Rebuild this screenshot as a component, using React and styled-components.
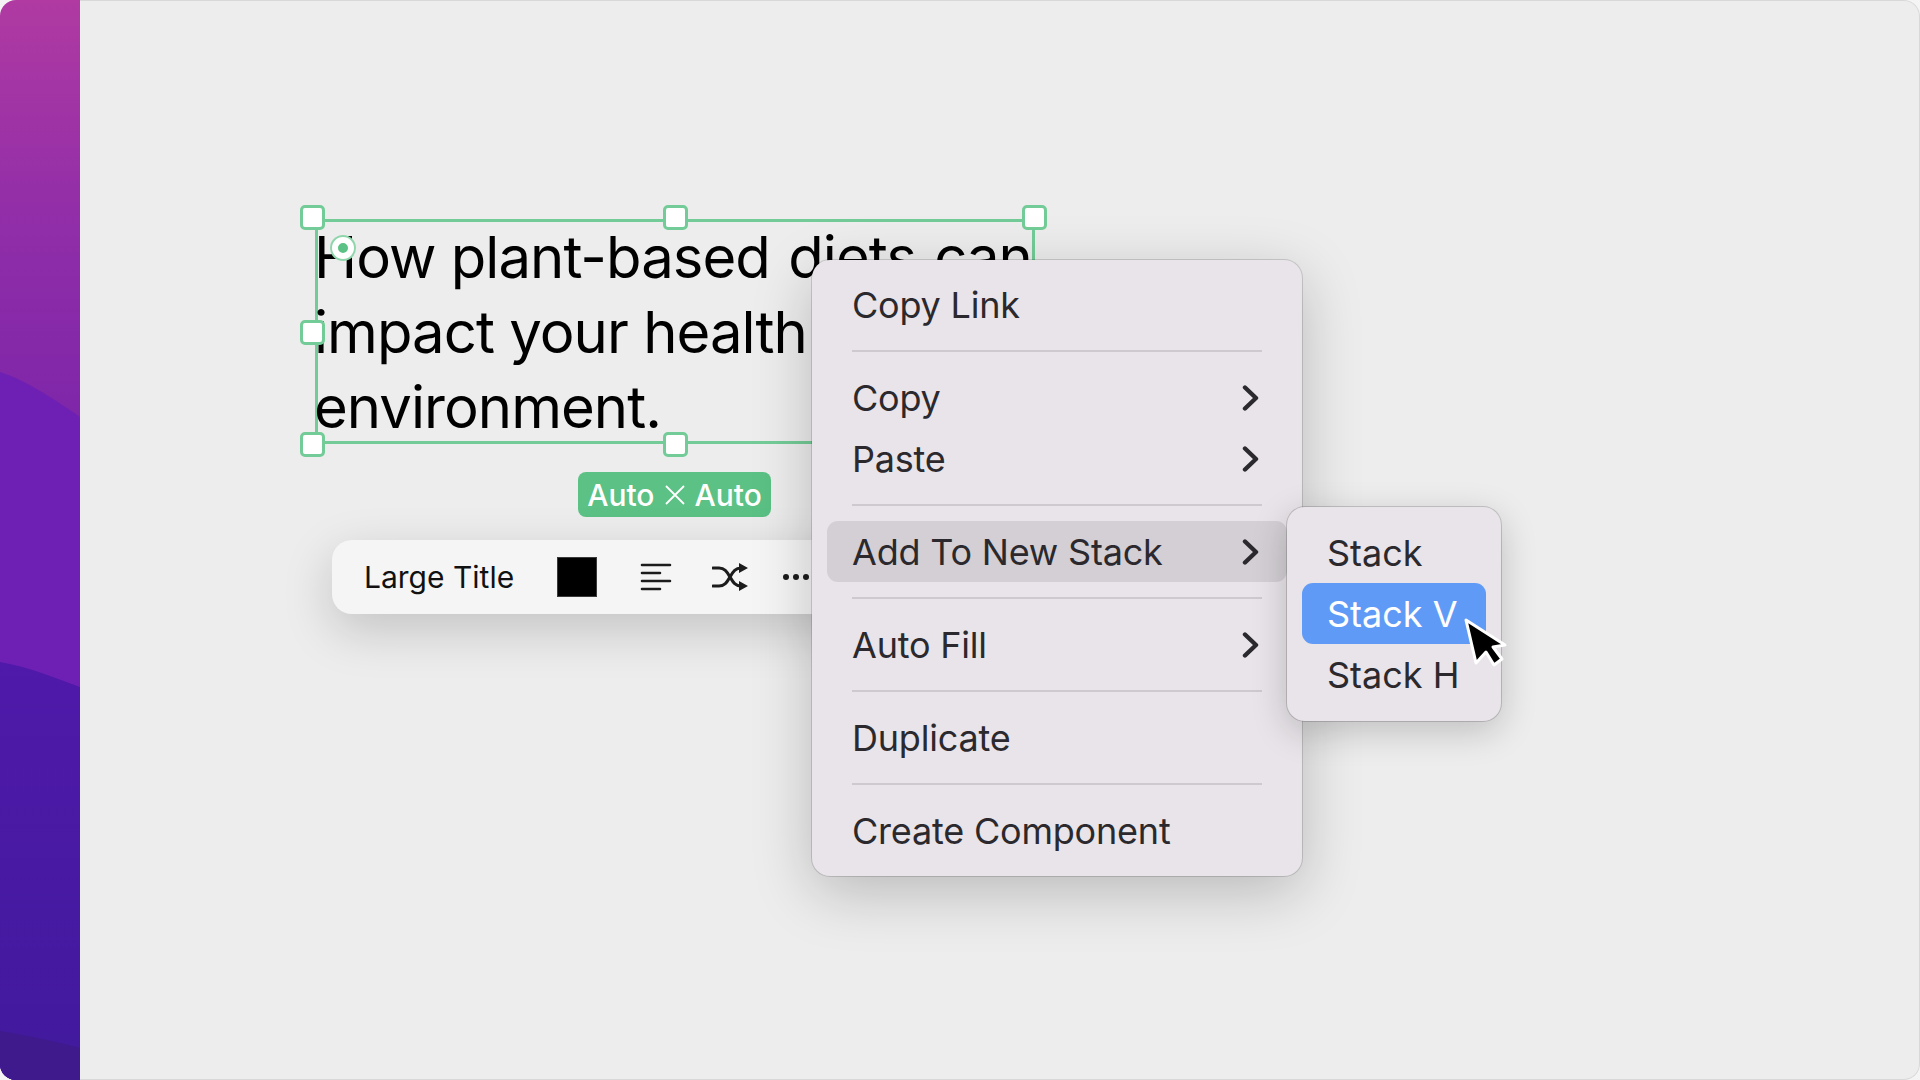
import { createGlobalStyle, styled } from "styled-components";

const GlobalStyle = createGlobalStyle`
  html, body {
    margin: 0;
    background: #f4f4f4;
  }
  body {
    font-family: Inter, "Liberation Sans", sans-serif;
  }
`;

const menuRows = [
  { label: "Copy Link" },
  { separator: true },
  { label: "Copy", more: true },
  { label: "Paste", more: true },
  { separator: true },
  { label: "Add To New Stack", more: true, open: true },
  { separator: true },
  { label: "Auto Fill", more: true },
  { separator: true },
  { label: "Duplicate" },
  { separator: true },
  { label: "Create Component" },
];

const handleSpots = [
  { x: "-6px", y: "-5px" },
  { x: "357px", y: "-5px" },
  { x: "716px", y: "-5px" },
  { x: "-6px", y: "110px" },
  { x: "-6px", y: "222px" },
  { x: "357px", y: "222px" },
];

const Chevron = () => (
  <ChevronIcon viewBox="0 0 17 26" fill="none">
    <path d="M3 2.5 L14 13 L3 23.5" stroke="#2b292d" strokeWidth="4.4" strokeLinecap="round" strokeLinejoin="round" />
  </ChevronIcon>
);

const App = () => {
  return (
    <>
      <GlobalStyle />
      <Window>
        <Wallpaper>
          <svg width="80" height="1080" viewBox="0 0 80 1080" preserveAspectRatio="none">
            <defs>
              <linearGradient id="wallTop" gradientUnits="userSpaceOnUse" x1="0" y1="0" x2="0" y2="420">
                <stop offset="0" stopColor="#b03aa2" />
                <stop offset="0.5" stopColor="#922ea8" />
                <stop offset="1" stopColor="#7e26a9" />
              </linearGradient>
              <linearGradient id="wallMid" gradientUnits="userSpaceOnUse" x1="0" y1="660" x2="0" y2="1050">
                <stop offset="0" stopColor="#4f19a9" />
                <stop offset="1" stopColor="#421a9e" />
              </linearGradient>
            </defs>
            <rect width="80" height="1080" fill="url(#wallTop)" />
            <path d="M0 372 C30 382 55 400 80 417 L80 1080 L0 1080 Z" fill="#6e20b4" />
            <path d="M0 662 C30 667 55 678 80 687 L80 1080 L0 1080 Z" fill="url(#wallMid)" />
            <path d="M0 1031 C30 1036 50 1040 80 1048 L80 1080 L0 1080 Z" fill="#3e1a8c" />
          </svg>
        </Wallpaper>
        <Canvas>
          <Selection>
            <Headline>
              How plant-based <LooseWords>diets can</LooseWords>
              <br />
              impact your health and the
              <br />
              environment.
            </Headline>
            {handleSpots.map((spot) => (
              <Handle key={spot.x + spot.y} $x={spot.x} $y={spot.y} />
            ))}
            <RotateDot />
          </Selection>
          <SizeBadge>
            Auto
            <svg width="22" height="22" viewBox="0 0 22 22">
              <path d="M2 2 L20 20 M20 2 L2 20" stroke="#fff" strokeWidth="1.8" />
            </svg>
            Auto
          </SizeBadge>
          <Toolbar>
            <StyleName>Large Title</StyleName>
            <Swatch />
            <svg width="32" height="28" viewBox="0 0 32 28" fill="none" stroke="#1c1c1c" strokeWidth="2.6" strokeLinecap="round">
              <path d="M2 2 H30 M2 10 H20 M2 18 H30 M2 26 H20" />
            </svg>
            <svg width="36" height="28" viewBox="0 0 36 28">
              <path
                d="M1 5 H7 C13 5 15 9 18 14 C21 19 23 23 29 23 M1 23 H7 C13 23 15 19 18 14 C21 9 23 5 29 5"
                fill="none"
                stroke="#1c1c1c"
                strokeWidth="3"
                strokeLinecap="round"
              />
              <path d="M27 0 L36 5 L27 10 Z M27 18 L36 23 L27 28 Z" fill="#1c1c1c" />
            </svg>
            <Dots>
              <span />
              <span />
              <span />
            </Dots>
          </Toolbar>
          <Menu>
            {menuRows.map((row, i) =>
              row.separator ? (
                <Separator key={i} />
              ) : (
                <MenuRow key={row.label} $open={row.open}>
                  {row.label}
                  {row.more && <Chevron />}
                </MenuRow>
              )
            )}
            <SubMenu>
              <SubRow>Stack</SubRow>
              <SubRow $active>Stack V</SubRow>
              <SubRow>Stack H</SubRow>
            </SubMenu>
          </Menu>
          <Cursor width="46" height="58" viewBox="0 0 46 58">
            <path
              d="M4 3 L14 46 L24 35 L32 48 L40 42 L31 30 L43 28 Z"
              fill="#000"
              stroke="#fff"
              strokeWidth="3"
              strokeLinejoin="round"
            />
          </Cursor>
        </Canvas>
      </Window>
    </>
  );
};
export default App;

const Window = styled.div`
  display: flex;
  width: 1920px;
  height: 1080px;
  box-sizing: border-box;
  border-radius: 16px;
  overflow: hidden;
  background: #ededed;
`;

const Wallpaper = styled.div`
  flex: 0 0 80px;
  height: 1080px;
  svg {
    display: block;
  }
`;

const Canvas = styled.div`
  position: relative;
  flex: 1;
  background: #ededed;
  border: 1px solid #d8d8d8;
  border-left: none;
  border-radius: 0 16px 16px 0;
`;

const Selection = styled.div`
  position: absolute;
  left: 235px;
  top: 218px;
  width: 720px;
  height: 225px;
  box-sizing: border-box;
  border: 3px solid #73cc97;
`;

const Headline = styled.div`
  font-size: 58px;
  line-height: 75px;
  font-weight: 400;
  color: #000;
  white-space: nowrap;
  margin-top: -2px;
  margin-left: -4px;
  letter-spacing: -0.95px;
`;

const LooseWords = styled.span`
  margin-left: 3px;
  word-spacing: 3px;
`;

const Handle = styled.div`
  position: absolute;
  left: ${(p) => p.$x};
  top: ${(p) => p.$y};
  width: 25px;
  height: 25px;
  margin: -12px 0 0 -12px;
  box-sizing: border-box;
  background: #fff;
  border: 3px solid #73cc97;
  border-radius: 5px;
`;

const RotateDot = styled.div`
  position: absolute;
  left: 14px;
  top: 15px;
  width: 22px;
  height: 22px;
  box-sizing: border-box;
  border-radius: 50%;
  border: 6px solid #fff;
  box-shadow: 0 0 0 2px #8fd6ac;
  background: #5bc184;
`;

const SizeBadge = styled.div`
  position: absolute;
  left: 498px;
  top: 471px;
  width: 193px;
  height: 45px;
  display: flex;
  align-items: center;
  justify-content: center;
  gap: 9px;
  border-radius: 8px;
  background: #5bc184;
  color: #fff;
  font-size: 30px;
  font-weight: 500;
`;

const Toolbar = styled.div`
  position: absolute;
  left: 252px;
  top: 539px;
  width: 560px;
  height: 74px;
  box-sizing: border-box;
  padding-left: 32px;
  display: flex;
  align-items: center;
  background: #f5f5f5;
  border-radius: 20px;
  box-shadow: 0 16px 50px rgba(0, 0, 0, 0.18);
  > svg:nth-of-type(1) {
    margin-left: 43px;
  }
  > svg:nth-of-type(2) {
    margin-left: 40px;
  }
`;

const StyleName = styled.div`
  font-size: 30px;
  color: #111;
  white-space: nowrap;
`;

const Swatch = styled.div`
  width: 40px;
  height: 40px;
  margin-left: 43px;
  box-sizing: border-box;
  background: #000;
  border: 1px solid #3a3a3a;
`;

const Dots = styled.div`
  display: flex;
  gap: 4px;
  margin-left: 35px;
  span {
    width: 6px;
    height: 6px;
    border-radius: 50%;
    background: #1c1c1c;
  }
`;

const Menu = styled.div`
  position: absolute;
  left: 732px;
  top: 259px;
  width: 490px;
  box-sizing: border-box;
  padding: 14px 15px 15px;
  background: #e8e4e9;
  border-radius: 18px;
  box-shadow: 0 0 0 1px rgba(0, 0, 0, 0.14), 0 16px 60px rgba(0, 0, 0, 0.22);
`;

const MenuRow = styled.div`
  display: flex;
  align-items: center;
  justify-content: space-between;
  height: 61px;
  padding: 0 25px;
  border-radius: 11px;
  font-size: 36px;
  letter-spacing: -0.2px;
  color: #2b292d;
  background: ${(p) => (p.$open ? "#d3cfd4" : "transparent")};
`;

const ChevronIcon = styled.svg`
  width: 17px;
  height: 26px;
  margin-right: 3px;
`;

const Separator = styled.div`
  height: 2px;
  margin: 15px 25px;
  background: #cdc9ce;
`;

const SubMenu = styled.div`
  position: absolute;
  left: 475px;
  top: 247px;
  width: 214px;
  height: 214px;
  box-sizing: border-box;
  padding: 15px;
  background: #e8e4e9;
  border-radius: 18px;
  box-shadow: 0 0 0 1px rgba(0, 0, 0, 0.16), 0 10px 36px rgba(0, 0, 0, 0.2);
`;

const SubRow = styled.div`
  display: flex;
  align-items: center;
  height: 61px;
  padding-left: 25px;
  border-radius: 11px;
  font-size: 36px;
  color: ${(p) => (p.$active ? "#fff" : "#2b292d")};
  background: ${(p) => (p.$active ? "#5f9bf6" : "transparent")};
`;

const Cursor = styled.svg`
  position: absolute;
  left: 1382px;
  top: 616px;
`;
